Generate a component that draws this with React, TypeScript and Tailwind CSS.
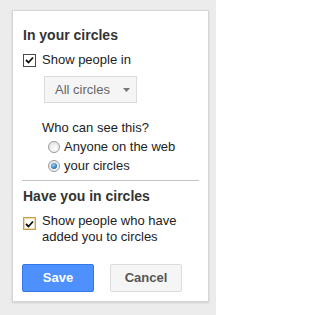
import React from "react";

function Check({ focused }: { focused?: boolean }) {
    return (
        <span
            className={`flex h-[13px] w-[13px] shrink-0 items-center justify-center bg-white border ${
                focused ? "border-[#c9a04a] shadow-[inset_0_0_0_1px_#f0d9a8]" : "border-[#4a4a4a]"
            }`}
        >
            <svg width="9" height="8" viewBox="0 0 9 8">
                <path d="M1 4 L3.5 6.5 L8 1.5" fill="none" stroke="#111" strokeWidth="1.8" />
            </svg>
        </span>
    );
}

function Radio({ checked }: { checked?: boolean }) {
    return (
        <span className="flex h-[12px] w-[12px] shrink-0 items-center justify-center rounded-full border border-[#9a9a9a] bg-[radial-gradient(circle_at_60%_65%,#ffffff,#dcdcdc)]">
            {checked && (
                <span className="h-[6px] w-[6px] rounded-full bg-[radial-gradient(circle_at_40%_35%,#9fd3f5,#1f6fb0_70%,#0f4d86)]" />
            )}
        </span>
    );
}

export default function App() {
    return (
        <div className="w-[216px] h-[315px] bg-[#ececec] pt-[10px] pl-[12px] font-['Liberation_Sans',Arial,sans-serif] text-[13px] text-[#222]">
            <div className="w-[197px] h-[292px] bg-white border border-[#d6d6d6] shadow-[0_1px_2px_rgba(0,0,0,0.12)] pt-[16px] pl-[10px] pr-[9px]">
                <h2 className="text-[14px] leading-[17px] font-bold text-[#333]">In your circles</h2>

                <label className="mt-[8px] flex items-center gap-[6px] leading-[16px]">
                    <Check />
                    <span>Show people in</span>
                </label>

                <div className="mt-[8px] ml-[21px] flex h-[27px] w-[93px] items-center border border-[#dcdcdc] bg-[#f5f5f5] pl-[10px] text-[#666]">
                    <span>All circles</span>
                    <svg className="ml-[13px]" width="7" height="4" viewBox="0 0 7 4">
                        <path d="M0 0 H7 L3.5 4 Z" fill="#777" />
                    </svg>
                </div>

                <div className="mt-[17px] ml-[19px]">
                    <div className="leading-[16px]">Who can see this?</div>
                    <label className="mt-[3px] flex h-[16px] items-center gap-[4px] pl-[6px]">
                        <Radio />
                        <span>Anyone on the web</span>
                    </label>
                    <label className="mt-[3px] flex h-[16px] items-center gap-[4px] pl-[6px]">
                        <Radio checked />
                        <span>your circles</span>
                    </label>
                </div>

                <div className="mt-[6px] h-px bg-[#c4c4c4] -ml-px" />

                <h2 className="mt-[7px] text-[14px] leading-[17px] font-bold text-[#333]">Have you in circles</h2>

                <label className="mt-[8px] flex items-start gap-[6px] leading-[16px]">
                    <span className="pt-[4px]">
                        <Check focused />
                    </span>
                    <span>
                        Show people who have
                        <br />
                        added you to circles
                    </span>
                </label>

                <div className="mt-[19px] -ml-px flex gap-[16px]">
                    <button className="h-[28px] w-[72px] rounded-[2px] border border-[#3079ed] bg-[#4d90fe] text-[13px] font-bold text-white">
                        Save
                    </button>
                    <button className="h-[28px] w-[72px] rounded-[2px] border border-[#dcdcdc] bg-[#f5f5f5] text-[13px] font-bold text-[#555]">
                        Cancel
                    </button>
                </div>
            </div>
        </div>
    );
}
